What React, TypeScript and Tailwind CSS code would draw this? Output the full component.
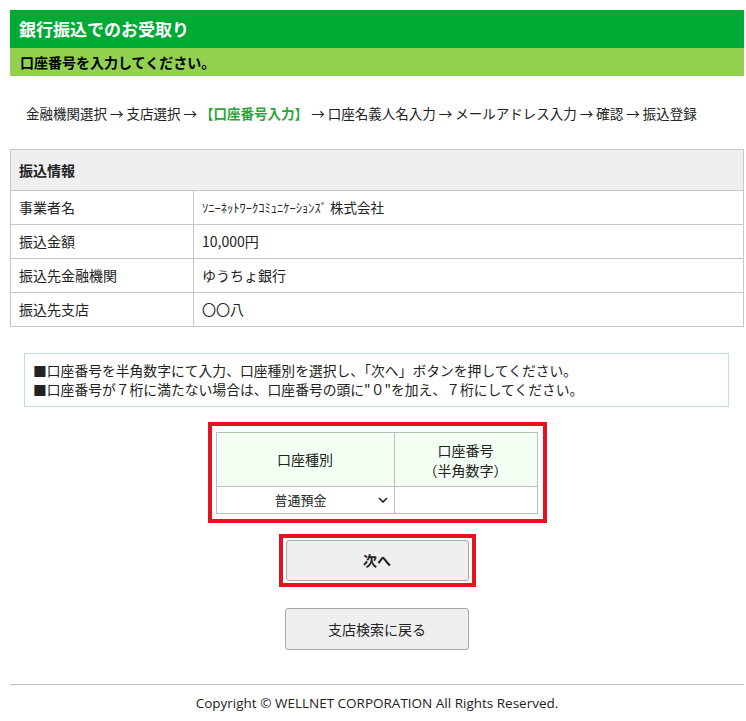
import React from "react";

const jp = { fontFamily: '"Noto Sans CJK JP", "Noto Sans", sans-serif' };

export default function App() {
  const rows: [string, React.ReactNode][] = [
    [
      "事業者名",
      <span>
        <span className="text-[12.5px]">ｿﾆｰﾈｯﾄﾜｰｸｺﾐｭﾆｹｰｼｮﾝｽﾞ</span>
        <span className="text-[13.5px]"> 株式会社</span>
      </span>,
    ],
    ["振込金額", "10,000円"],
    ["振込先金融機関", "ゆうちょ銀行"],
    ["振込先支店", "〇〇八"],
  ];
  return (
    <div className="bg-white text-[#222] pt-[10px] pb-[10px] pl-[10px] pr-[2px] w-[746px]" style={jp}>
      <div className="bg-[#00aa35] h-[38px] flex items-center px-[9px] text-white font-bold text-[17px]">
        銀行振込でのお受取り
      </div>
      <div className="bg-[#92d050] h-[28px] flex items-center px-[10px] text-black font-bold text-[14px]">
        口座番号を入力してください。
      </div>
      <div className="mt-[27px] pl-[16px] text-[13.5px] leading-[20px] h-[20px] whitespace-nowrap">
        金融機関選択 → 支店選択 → <span className="text-[#2aa53a] font-bold">【口座番号入力】</span> → 口座名義人名入力 → メールアドレス入力 → 確認 → 振込登録
      </div>
      <table className="mt-[26px] w-full border-collapse text-[14px]">
        <tbody>
          <tr className="bg-[#efefef]">
            <td colSpan={2} className="border border-[#c8c8c8] h-[41px] px-[8px] font-bold">
              振込情報
            </td>
          </tr>
          {rows.map(([k, v]) => (
            <tr key={k}>
              <td className="border border-[#c8c8c8] h-[34px] px-[8px] w-[183px]">{k}</td>
              <td className="border border-[#c8c8c8] h-[34px] px-[8px]">{v}</td>
            </tr>
          ))}
        </tbody>
      </table>
      <div className="mt-[26px] ml-[14px] mr-[15px] border border-[#b9e6c8] h-[54px] px-[8px] flex flex-col justify-center text-[13.8px] leading-[19px]">
        <div>■口座番号を半角数字にて入力、口座種別を選択し、「次へ」ボタンを押してください。</div>
        <div>■口座番号が７桁に満たない場合は、口座番号の頭に"０"を加え、７桁にしてください。</div>
      </div>
      <div className="flex justify-center mt-[15px]">
        <div className="border-4 border-[#e3141f] pt-[6px] pb-[5px] pl-[4px] pr-[5px] w-[339px]">
          <table className="w-full border-collapse text-[14px]">
            <tbody>
              <tr className="bg-[#f2fff2]">
                <td className="border border-[#bdbdbd] h-[54px] text-center w-[178px]">口座種別</td>
                <td className="border border-[#bdbdbd] h-[54px] text-center leading-[20px]">
                  口座番号
                  <br />
                  （半角数字）
                </td>
              </tr>
              <tr className="bg-white">
                <td className="border border-[#bdbdbd] h-[27px] p-0">
                  <div className="flex items-center justify-between h-[25px] pl-[58px] pr-[6px] text-[13px]">
                    <span>普通預金</span>
                    <svg width="10" height="6" viewBox="0 0 10 6">
                      <path d="M1 1 L5 5 L9 1" fill="none" stroke="#222" strokeWidth="1.6" />
                    </svg>
                  </div>
                </td>
                <td className="border border-[#bdbdbd] h-[27px]"></td>
              </tr>
            </tbody>
          </table>
        </div>
      </div>
      <div className="flex justify-center mt-[11px]">
        <div className="border-4 border-[#e3141f] px-[3px] py-[2px]">
          <button className="w-[183px] h-[41px] bg-[#efefef] border border-[#a8a8a8] rounded-[3px] text-[14px] font-bold" style={jp}>
            次へ
          </button>
        </div>
      </div>
      <div className="flex justify-center mt-[21px]">
        <button className="w-[184px] h-[42px] bg-[#efefef] border border-[#a8a8a8] rounded-[3px] text-[14px]" style={jp}>
          支店検索に戻る
        </button>
      </div>
      <div className="mt-[34px] border-t border-[#bbb]"></div>
      <div
        className="text-center text-[13.5px] mt-[8px]"
        style={{ fontFamily: '"Open Sans", "Noto Sans", sans-serif' }}
      >
        Copyright © WELLNET CORPORATION All Rights Reserved.
      </div>
    </div>
  );
}
